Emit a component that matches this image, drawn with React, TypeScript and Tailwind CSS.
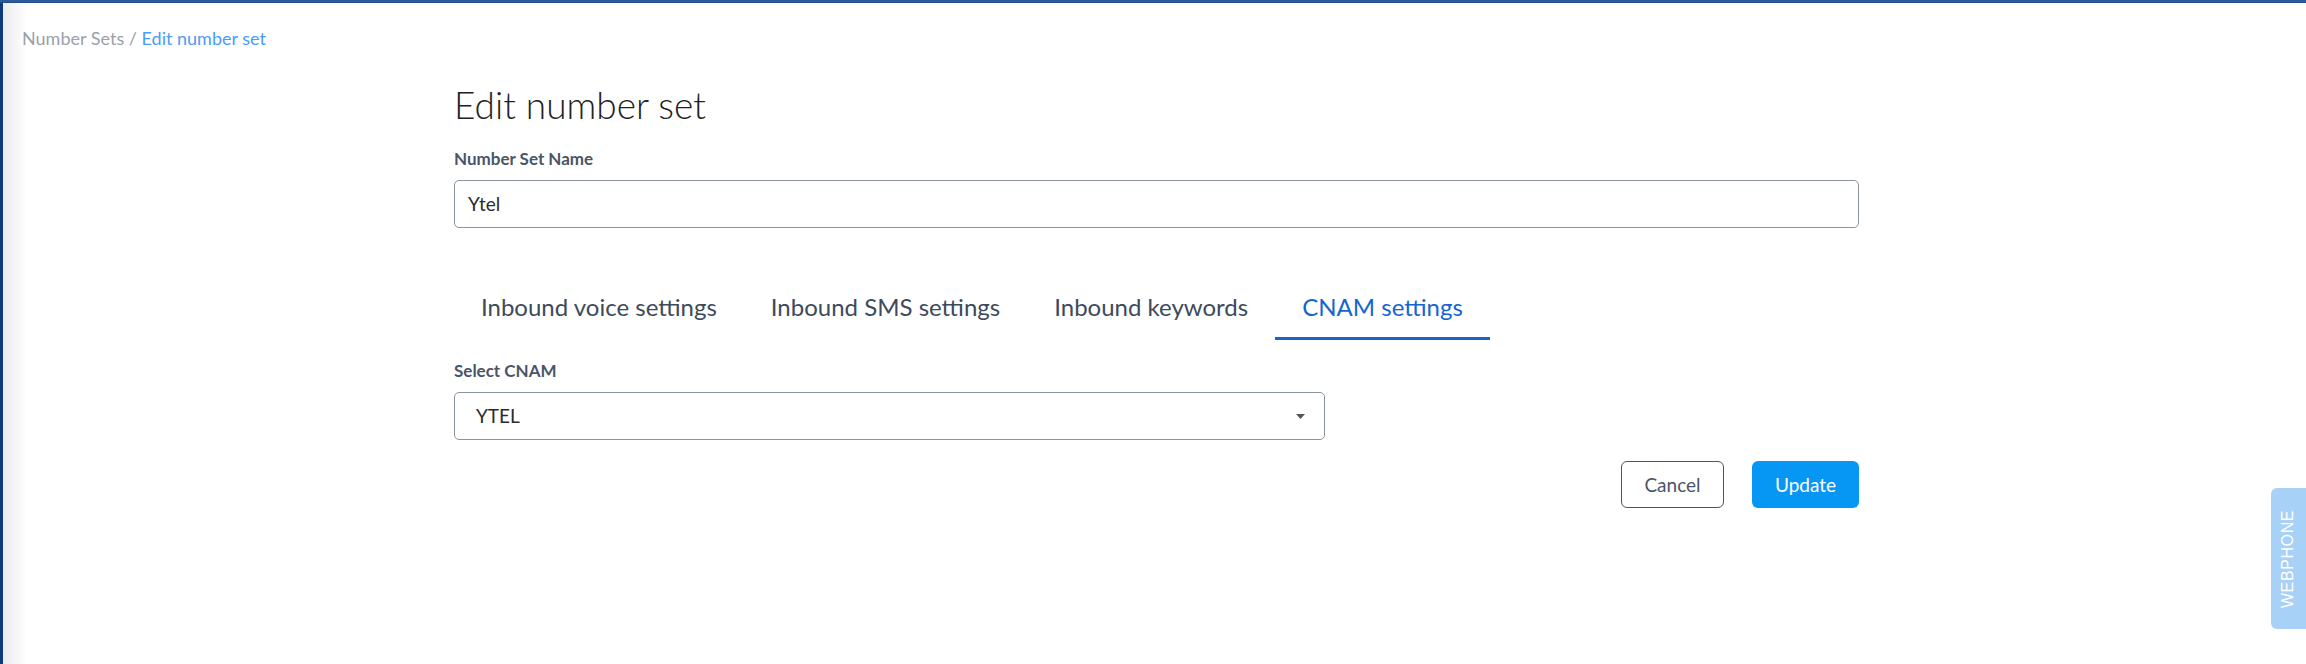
import React from 'react';

export default function App() {
  const tabs = [
    { label: 'Inbound voice settings', active: false },
    { label: 'Inbound SMS settings', active: false },
    { label: 'Inbound keywords', active: false },
    { label: 'CNAM settings', active: true },
  ];

  return (
    <div className="relative h-[664px] w-full overflow-hidden bg-white font-['Lato','Liberation_Sans',sans-serif]">
      {/* Top bar */}
      <div className="h-[3px] w-full bg-[#2d5a9a] border-b border-[#244d88]" />

      <div className="flex h-[661px]">
        {/* Sidebar edge */}
        <div className="w-[3px] shrink-0 bg-[#0d3a78]" />

        {/* Main */}
        <div className="flex-1 bg-[linear-gradient(to_right,#ececec,#ffffff_24px)]">
          {/* Breadcrumb */}
          <div className="pl-[19px] pt-[23px] text-[18px] leading-6">
            <span className="text-[#9aa1a9]">Number Sets / </span>
            <span className="text-[#4a9df8]">Edit number set</span>
          </div>

          {/* Form */}
          <div className="ml-[451px] w-[1405px]">
            <h1 className="mt-[33px] text-[37px] font-light leading-[1.2] text-[#222]">
              Edit number set
            </h1>

            <label className="mt-[20px] block text-[17px] font-bold leading-6 text-[#4a5568]">
              Number Set Name
            </label>
            <div className="mt-[9px] flex h-[48px] items-center rounded-[5px] border border-[#8a939e] px-[13px] text-[19px] text-[#2b2b2b]">
              Ytel
            </div>

            {/* Tabs */}
            <div className="mt-[49px] flex">
              {tabs.map((tab) => (
                <div
                  key={tab.label}
                  className={`px-[27px] py-[16px] text-[24px] leading-7 border-b-[3px] ${
                    tab.active
                      ? 'border-[#1565d0] text-[#1565d0]'
                      : 'border-transparent text-[#3d4a5c]'
                  }`}
                >
                  {tab.label}
                </div>
              ))}
            </div>

            <label className="mt-[19px] block text-[17px] font-bold leading-6 text-[#4a5568]">
              Select CNAM
            </label>
            <div className="mt-[9px] flex h-[48px] w-[871px] items-center justify-between rounded-[5px] border border-[#8a939e] pl-[21px] pr-[19px] text-[19px] text-[#2b2b2b]">
              <span>YTEL</span>
              <svg width="9" height="5" viewBox="0 0 9 5" className="fill-[#555]">
                <path d="M0 0h9L4.5 5z" />
              </svg>
            </div>

            {/* Actions */}
            <div className="mt-[21px] flex justify-end gap-[28px]">
              <button className="h-[47px] w-[103px] rounded-[6px] border border-[#4a5568] bg-white text-[19px] text-[#4a5568]">
                Cancel
              </button>
              <button className="h-[47px] w-[107px] rounded-[6px] bg-[#0696f4] text-[19px] text-white">
                Update
              </button>
            </div>
          </div>
        </div>
      </div>

      {/* Webphone tab */}
      <div className="absolute right-0 top-[488px] flex h-[141px] w-[35px] items-center justify-center rounded-l-[6px] bg-[#a8d1f7]">
        <span className="-rotate-90 whitespace-nowrap font-['Liberation_Sans',sans-serif] text-[16px] tracking-[0.6px] text-white">
          WEBPHONE
        </span>
      </div>
    </div>
  );
}
